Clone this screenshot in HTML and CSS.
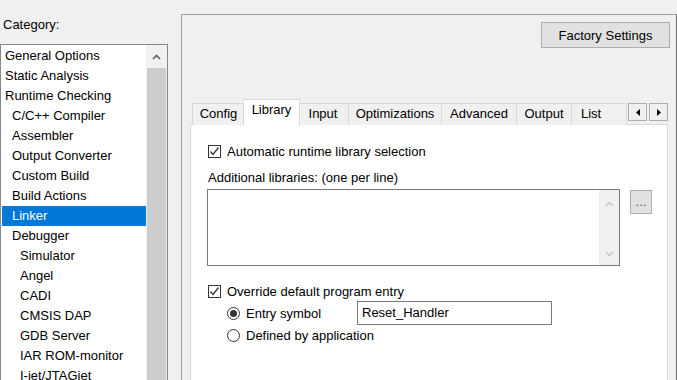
FILE: index.html
```html
<!DOCTYPE html>
<html lang="en">
<head>
  <meta charset="UTF-8">
  <title>Options</title>
  <link rel="stylesheet" href="styles.css">
</head>
<body>
  <div class="window">
    <!-- left: category list -->
    <div class="sidebar">
      <div class="cat-label">Category:</div>
      <div class="listbox">
        <ul class="items">
          <li class="lvl0">General Options</li>
          <li class="lvl0">Static Analysis</li>
          <li class="lvl0">Runtime Checking</li>
          <li class="lvl1">C/C++ Compiler</li>
          <li class="lvl1">Assembler</li>
          <li class="lvl1">Output Converter</li>
          <li class="lvl1">Custom Build</li>
          <li class="lvl1">Build Actions</li>
          <li class="lvl1 selected">Linker</li>
          <li class="lvl1">Debugger</li>
          <li class="lvl2">Simulator</li>
          <li class="lvl2">Angel</li>
          <li class="lvl2">CADI</li>
          <li class="lvl2">CMSIS DAP</li>
          <li class="lvl2">GDB Server</li>
          <li class="lvl2">IAR ROM-monitor</li>
          <li class="lvl2">I-jet/JTAGjet</li>
        </ul>
        <div class="vscroll">
          <div class="vscroll-arrow">
            <svg width="9" height="6" viewBox="0 0 9 6"><polyline points="1,5 4.5,1.5 8,5" fill="none" stroke="#606060" stroke-width="1.6"/></svg>
          </div>
          <div class="vscroll-thumb"></div>
        </div>
      </div>
    </div>

    <!-- right: settings panel -->
    <div class="panel">
      <div class="panel-top">
        <button class="btn btn-factory">Factory Settings</button>
      </div>

      <div class="tabstrip">
        <div class="tab w-config">Config</div>
        <div class="tab active w-library">Library</div>
        <div class="tab w-input">Input</div>
        <div class="tab w-opt">Optimizations</div>
        <div class="tab w-adv">Advanced</div>
        <div class="tab w-output">Output</div>
        <div class="tab w-list">List</div>
        <div class="tab-scroll">
          <span class="tab-scroll-btn"><svg width="4" height="7" viewBox="0 0 4 7"><polygon points="4,0 0,3.5 4,7" fill="#000"/></svg></span>
          <span class="tab-scroll-btn"><svg width="4" height="7" viewBox="0 0 4 7"><polygon points="0,0 4,3.5 0,7" fill="#000"/></svg></span>
        </div>
      </div>

      <div class="page">
        <label class="check-row first">
          <span class="checkbox checked">
            <svg width="11" height="11" viewBox="0 0 11 11"><polyline points="1.5,5.5 4,8.5 9.5,1.5" fill="none" stroke="#333" stroke-width="1.3"/></svg>
          </span>
          <span>Automatic runtime library selection</span>
        </label>

        <div class="field-label">Additional libraries: (one per line)</div>
        <div class="libs-row">
          <div class="textarea">
            <div class="textarea-body"></div>
            <div class="ta-scroll">
              <svg width="9" height="6" viewBox="0 0 9 6"><polyline points="1,5 4.5,1.5 8,5" fill="none" stroke="#c2c2c2" stroke-width="1.4"/></svg>
              <svg width="9" height="6" viewBox="0 0 9 6"><polyline points="1,1 4.5,4.5 8,1" fill="none" stroke="#c2c2c2" stroke-width="1.4"/></svg>
            </div>
          </div>
          <button class="btn btn-browse">...</button>
        </div>

        <label class="check-row second">
          <span class="checkbox checked">
            <svg width="11" height="11" viewBox="0 0 11 11"><polyline points="1.5,5.5 4,8.5 9.5,1.5" fill="none" stroke="#333" stroke-width="1.3"/></svg>
          </span>
          <span>Override default program entry</span>
        </label>

        <div class="radio-group">
          <div class="radio-row entry">
            <span class="radio on"></span>
            <span class="radio-text">Entry symbol</span>
            <div class="text-input">Reset_Handler</div>
          </div>
          <div class="radio-row">
            <span class="radio"></span>
            <span>Defined by application</span>
          </div>
        </div>
      </div>
    </div>
  </div>
</body>
</html>
```

FILE: styles.css
```css
html, body {
  margin: 0;
  padding: 0;
}
body {
  background: #f0f0f0;
  font-family: 'Liberation Sans', Arial, sans-serif;
  font-size: 13px;
  color: #000;
}
.window {
  display: flex;
  width: 677px;
  height: 380px;
  overflow: hidden;
}

/* sidebar */
.sidebar {
  width: 168px;
  flex: none;
}
.cat-label {
  padding: 17px 0 0 3px;
  height: 44px;
  line-height: 16px;
  box-sizing: border-box;
}
.listbox {
  display: flex;
  border: 1px solid #828790;
  border-bottom: none;
  background: #fff;
  height: 400px;
}
.items {
  list-style: none;
  margin: 0;
  padding: 1px 0 0 1px;
  flex: 1;
}
.items li {
  height: 20px;
  line-height: 20px;
  white-space: nowrap;
}
.items .lvl0 { padding-left: 3px; }
.items .lvl1 { padding-left: 10px; }
.items .lvl2 { padding-left: 18px; }
.items .selected {
  background: #0078d7;
  color: #fff;
}
.vscroll {
  width: 21px;
  background: #f0f0f0;
  display: flex;
  flex-direction: column;
  align-items: center;
}
.vscroll-arrow {
  height: 23px;
  display: flex;
  align-items: center;
  justify-content: center;
}
.vscroll-thumb {
  width: 19px;
  flex: 1;
  background: #cdcdcd;
}

/* panel */
.panel {
  flex: 1;
  margin: 14px 0 0 13px;
  border: 1px solid #a0a0a0;
  border-right-color: #696969;
  border-bottom: none;
  display: flex;
  flex-direction: column;
}
.panel-top {
  display: flex;
  justify-content: flex-end;
  padding: 7px 6px 0 0;
}
.btn {
  font-family: inherit;
  font-size: 13px;
  color: #000;
  background: #e1e1e1;
  border: 1px solid #adadad;
  padding: 0;
  margin: 0;
}
.btn-factory {
  width: 129px;
  height: 26px;
}

/* tabs */
.tabstrip {
  display: flex;
  align-items: flex-end;
  height: 26px;
  margin: 51px 8px 0 8px;
  padding-left: 2px;
  position: relative;
  z-index: 1;
}
.tab {
  height: 22px;
  line-height: 20px;
  box-sizing: border-box;
  border: 1px solid #d9d9d9;
  border-bottom: none;
  border-left: none;
  background: #f0f0f0;
  text-align: center;
  white-space: nowrap;
  overflow: hidden;
}
.tab:first-child { border-left: 1px solid #d9d9d9; }
.tab.active {
  height: 27px;
  margin: 0 -2px -1px -2px;
  border-left: 1px solid #d9d9d9;
  background: #fff;
  line-height: 20px;
  position: relative;
  z-index: 2;
}
.w-config { width: 53px; }
.w-library { width: 57px; }
.w-input { width: 51px; }
.w-opt { width: 93px; }
.w-adv { width: 75px; }
.w-output { width: 55px; }
.w-list { width: 55px; text-align: left; padding-left: 9px; }
.tab-scroll {
  display: flex;
  align-self: flex-start;
  margin: 4px 0 0 1px;
}
.tab-scroll-btn {
  width: 19px;
  height: 18px;
  border: 1px solid #adadad;
  background: #f0f0f0;
  display: flex;
  align-items: center;
  justify-content: center;
  box-sizing: border-box;
}
.tab-scroll-btn + .tab-scroll-btn { margin-left: 2px; }

/* tab page */
.page {
  flex: 1;
  margin: -1px 8px 0 8px;
  border: 1px solid #d9d9d9;
  border-bottom: none;
  background: #fff;
  padding: 0 0 0 17px;
}
.check-row {
  display: flex;
  align-items: center;
  height: 14px;
  gap: 6px;
}
.check-row.first { margin-top: 19px; }
.check-row.second { margin-top: 18px; }
.checkbox {
  width: 13px;
  height: 13px;
  box-sizing: border-box;
  border: 1px solid #333;
  background: #fff;
  display: flex;
  align-items: center;
  justify-content: center;
}
.field-label {
  margin-top: 12px;
  line-height: 16px;
}
.libs-row {
  display: flex;
  align-items: flex-start;
  margin-top: 3px;
  margin-left: -1px;
}
.textarea {
  width: 413px;
  height: 77px;
  box-sizing: border-box;
  border: 1px solid #7a7a7a;
  display: flex;
}
.textarea-body { flex: 1; }
.ta-scroll {
  width: 20px;
  background: #f0f0f0;
  display: flex;
  flex-direction: column;
  align-items: center;
  justify-content: space-between;
  padding: 11px 0 8px;
  box-sizing: border-box;
}
.btn-browse {
  width: 22px;
  height: 24px;
  margin: 1px 0 0 10px;
  color: #555;
  line-height: 14px;
}
.radio-group {
  margin-left: 19px;
  margin-top: 3px;
}
.radio-row {
  display: flex;
  align-items: center;
  height: 20px;
  gap: 6px;
}
.radio-row.entry { height: 24px; }
.radio {
  width: 13px;
  height: 13px;
  box-sizing: border-box;
  border: 1px solid #333;
  border-radius: 50%;
  background: #fff;
  position: relative;
}
.radio.on::after {
  content: '';
  position: absolute;
  left: 2px;
  top: 2px;
  width: 7px;
  height: 7px;
  border-radius: 50%;
  background: #333;
}
.radio-text { width: 105px; }
.text-input {
  width: 195px;
  height: 24px;
  box-sizing: border-box;
  border: 1px solid #7a7a7a;
  line-height: 22px;
  padding-left: 4px;
}
```
